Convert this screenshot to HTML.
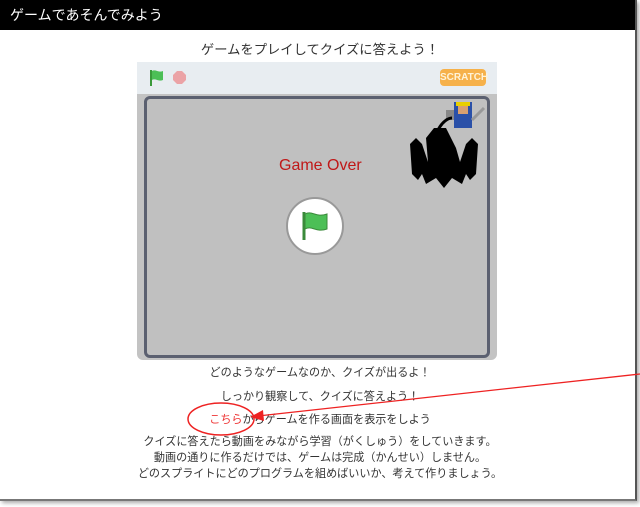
<!DOCTYPE html>
<html><head><meta charset="utf-8"><style>
body{margin:0;width:640px;height:507px;background:#fff;position:relative;overflow:hidden;font-family:"Liberation Sans","Noto Sans CJK JP",sans-serif;color:#333}
.frame{position:absolute;left:0;top:0;width:635px;height:499px;background:#fff;border-right:2px solid #555;border-bottom:2px solid #777;box-shadow:2px 2px 4px #aaa}
.hdr{position:absolute;left:0;top:0;width:635px;height:30px;background:#000;color:#fff;font-size:14px;line-height:30px;padding-left:10px;box-sizing:border-box}
.t{position:absolute;left:0;width:640px;text-align:center;font-size:11.1px;white-space:nowrap}
.tb{position:absolute;left:137px;top:62px;width:360px;height:32px;background:#e8edf1}
.st{position:absolute;left:137px;top:94px;width:360px;height:266px;background:#c3c3c3;border-radius:0 0 6px 6px}
.in{position:absolute;left:144px;top:96px;width:340px;height:256px;background:#c0c0c0;border:3px solid #5b6070;border-radius:6px}
</style></head><body>
<div class="frame"></div>
<div class="hdr">ゲームであそんでみよう</div>
<div class="t" style="top:39px;font-size:13.3px">ゲームをプレイしてクイズに答えよう！</div>
<div class="tb"></div>
<svg style="position:absolute;left:148px;top:68px" width="44" height="20"><path d="M3 2v16" stroke="#3a9a3a" stroke-width="2"/><path d="M4 3c4-2 6 2 11 0v9c-5 2-7-2-11 0z" fill="#4cbf56"/><polygon points="29,3 34,3 38,7 38,12 34,16 29,16 25,12 25,7" fill="#eba3a6"/></svg>
<div style="position:absolute;left:440px;top:69px;width:46px;height:17px;background:#f6b14a;border-radius:4px;color:#fff3d8;font-size:10px;font-weight:bold;text-align:center;line-height:17px">SCRATCH</div>
<div class="st"></div>
<div class="in"></div>
<div style="position:absolute;left:279px;top:157px;color:#c01818;font-size:16px">Game Over</div>
<div style="position:absolute;left:286px;top:197px;width:58px;height:58px;border-radius:50%;background:#fff;border:2px solid #999;box-sizing:border-box"></div>
<svg style="position:absolute;left:299px;top:209px" width="34" height="34"><path d="M5 3v28" stroke="#3a8a3a" stroke-width="3"/><path d="M6 5c7-4 11 4 22 0v15c-11 4-15-4-22 0z" fill="#4cbf56" stroke="#3a8a3a"/></svg>
<svg style="position:absolute;left:398px;top:98px" width="92" height="100">
<rect x="56" y="4" width="18" height="26" fill="#2a50a8"/><rect x="58" y="4" width="14" height="4" fill="#e8d000"/><rect x="60" y="8" width="10" height="8" fill="#d8a070"/><rect x="48" y="12" width="8" height="10" fill="#888"/><path d="M74 22l12-12" stroke="#999" stroke-width="3"/>
<path d="M28 40l8-10h12l4 8l6 12 4 14 6-18 6-6 6 6-2 30-6 6-4-6-4 10-10-6-8 10-8-10-10 6-4-10-4 6-6-6-2-30 6-6 6 6 6 18z" fill="#000"/><path d="M40 32c4-8 10-12 14-12" stroke="#000" stroke-width="3" fill="none"/>
</svg>
<div class="t" style="top:364px">どのようなゲームなのか、クイズが出るよ！</div>
<div class="t" style="top:388px">しっかり観察して、クイズに答えよう！</div>
<div class="t" style="top:411px"><span style="color:#e33">こちら</span>からゲームを作る画面を表示をしよう</div>
<div class="t" style="top:434px;line-height:16px">クイズに答えたら動画をみながら学習（がくしゅう）をしていきます。<br>動画の通りに作るだけでは、ゲームは完成（かんせい）しません。<br>どのスプライトにどのプログラムを組めばいいか、考えて作りましょう。</div>
<svg style="position:absolute;left:0;top:0" width="640" height="507"><ellipse cx="221" cy="419" rx="33" ry="16" fill="none" stroke="#e22" stroke-width="1.5"/><line x1="640" y1="374" x2="258" y2="416" stroke="#e22" stroke-width="1.3"/><polygon points="250,417 263,410 264,421" fill="#e22"/></svg>
</body></html>
